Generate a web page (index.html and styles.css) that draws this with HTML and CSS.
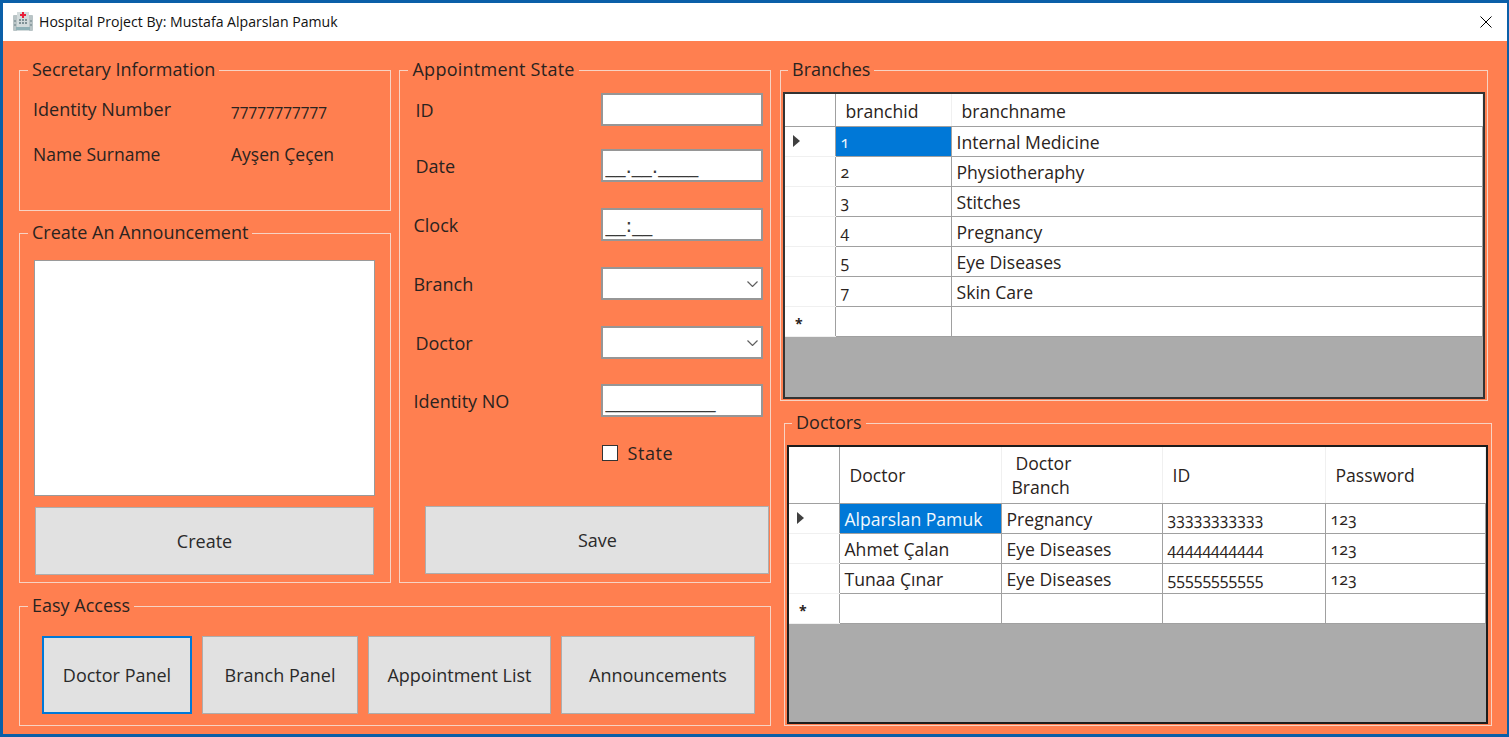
FILE: index.html
```html
<!DOCTYPE html>
<html lang="en">
<head>
    <meta charset="UTF-8">
    <meta name="viewport" content="width=device-width, initial-scale=1.0">
    <title>Hospital Project By: Mustafa Alparslan Pamuk</title>
    <link rel="stylesheet" href="styles.css">
</head>
<body>

<div class="window">

    <div class="titlebar">
        <svg class="app-icon" width="20" height="20" viewBox="0 0 20 20">
            <rect x="0" y="4" width="20" height="16" rx="1" fill="#b9c4c6"/>
            <rect x="4" y="1" width="12" height="19" fill="#d3dbdc"/>
            <rect x="6" y="8" width="2" height="2" fill="#7f9196"/>
            <rect x="9" y="8" width="2" height="2" fill="#7f9196"/>
            <rect x="12" y="8" width="2" height="2" fill="#7f9196"/>
            <rect x="6" y="11" width="2" height="2" fill="#7f9196"/>
            <rect x="9" y="11" width="2" height="2" fill="#7f9196"/>
            <rect x="12" y="11" width="2" height="2" fill="#7f9196"/>
            <rect x="1" y="9" width="2" height="2" fill="#8fa0a4"/>
            <rect x="1" y="13" width="2" height="2" fill="#8fa0a4"/>
            <rect x="17" y="9" width="2" height="2" fill="#8fa0a4"/>
            <rect x="17" y="13" width="2" height="2" fill="#8fa0a4"/>
            <rect x="3" y="16" width="14" height="3" fill="#8fb0b6"/>
            <path d="M9 1h2v2h2v2h-2v2H9V5H7V3h2z" fill="#e8203a"/>
        </svg>
        <span class="title-text">Hospital Project By: Mustafa Alparslan Pamuk</span>
        <svg class="close-icon" width="12" height="12" viewBox="0 0 12 12">
            <path d="M0.5 0.5L11.5 11.5M11.5 0.5L0.5 11.5" stroke="#000" stroke-width="1" fill="none"/>
        </svg>
    </div>

    <div class="form-area">

        <div class="left-area">
            <div class="top-row">

                <div class="left-col">
                    <fieldset class="group group-secretary">
                        <legend>Secretary Information</legend>
                        <div class="info-grid">
                            <span>Identity Number</span>
                            <span class="info-number">77777777777</span>
                            <span class="info-name">Name Surname</span>
                            <span class="info-name">Ayşen Çeçen</span>
                        </div>
                    </fieldset>

                    <fieldset class="group group-announce">
                        <legend>Create An Announcement</legend>
                        <textarea class="announce-text"></textarea>
                        <button class="btn btn-create" type="button">Create</button>
                    </fieldset>
                </div>

                <fieldset class="group group-appointment">
                    <legend>Appointment State</legend>
                    <div class="field-row field-row-first">
                        <label class="indent" for="randevuId">ID</label>
                        <input type="text" id="randevuId">
                    </div>
                    <div class="field-row">
                        <label class="indent" for="tarih">Date</label>
                        <input class="mask" type="text" id="tarih" value="__.__.____">
                    </div>
                    <div class="field-row">
                        <label for="saat">Clock</label>
                        <input class="mask" type="text" id="saat" value="__:__">
                    </div>
                    <div class="field-row">
                        <label for="brans">Branch</label>
                        <div class="combo">
                            <select id="brans"></select>
                            <svg class="combo-arrow" width="11" height="6" viewBox="0 0 11 6"><path d="M0.5 0.5L5.5 5.5L10.5 0.5" stroke="#606060" stroke-width="1.2" fill="none"/></svg>
                        </div>
                    </div>
                    <div class="field-row field-row-tight">
                        <label class="indent" for="doktor">Doctor</label>
                        <div class="combo">
                            <select id="doktor"></select>
                            <svg class="combo-arrow" width="11" height="6" viewBox="0 0 11 6"><path d="M0.5 0.5L5.5 5.5L10.5 0.5" stroke="#606060" stroke-width="1.2" fill="none"/></svg>
                        </div>
                    </div>
                    <div class="field-row">
                        <label for="tc">Identity NO</label>
                        <input class="mask" type="text" id="tc" value="___________">
                    </div>
                    <div class="state-row">
                        <input type="checkbox" id="durum">
                        <label for="durum">State</label>
                    </div>
                    <button class="btn btn-save" type="button">Save</button>
                </fieldset>

            </div>

            <fieldset class="group group-access">
                <legend>Easy Access</legend>
                <div class="access-row">
                    <button class="btn btn-focus btn-doctor" type="button">Doctor Panel</button>
                    <button class="btn btn-branch" type="button">Branch Panel</button>
                    <button class="btn btn-list" type="button">Appointment List</button>
                    <button class="btn btn-news" type="button">Announcements</button>
                </div>
            </fieldset>
        </div>

        <div class="right-area">
            <fieldset class="group group-branches">
                <legend>Branches</legend>
                <div class="data-grid">
                    <table>
                        <colgroup>
                            <col class="col-head"><col class="col-id"><col>
                        </colgroup>
                        <thead>
                            <tr><th class="row-head"></th><th>branchid</th><th>branchname</th></tr>
                        </thead>
                        <tbody>
                            <tr><td class="row-head"><span class="arrow"></span></td><td class="selected num">1</td><td>Internal Medicine</td></tr>
                            <tr><td class="row-head"></td><td class="num">2</td><td>Physiotheraphy</td></tr>
                            <tr><td class="row-head"></td><td class="num">3</td><td>Stitches</td></tr>
                            <tr><td class="row-head"></td><td class="num">4</td><td>Pregnancy</td></tr>
                            <tr><td class="row-head"></td><td class="num">5</td><td>Eye Diseases</td></tr>
                            <tr><td class="row-head"></td><td class="num">7</td><td>Skin Care</td></tr>
                            <tr><td class="row-head star">*</td><td></td><td></td></tr>
                        </tbody>
                    </table>
                </div>
            </fieldset>

            <fieldset class="group group-doctors">
                <legend>Doctors</legend>
                <div class="data-grid">
                    <table class="doctors-table">
                        <colgroup>
                            <col class="col-head"><col class="col-doc"><col class="col-doc-branch"><col class="col-doc-id"><col>
                        </colgroup>
                        <thead>
                            <tr>
                                <th class="row-head"></th>
                                <th>Doctor</th>
                                <th><span class="two-line"><span class="line-top">Doctor</span><span>Branch</span></span></th>
                                <th>ID</th>
                                <th>Password</th>
                            </tr>
                        </thead>
                        <tbody>
                            <tr><td class="row-head"><span class="arrow"></span></td><td class="selected">Alparslan Pamuk</td><td>Pregnancy</td><td class="num">33333333333</td><td class="num">123</td></tr>
                            <tr><td class="row-head"></td><td>Ahmet Çalan</td><td>Eye Diseases</td><td class="num">44444444444</td><td class="num">123</td></tr>
                            <tr><td class="row-head"></td><td>Tunaa Çınar</td><td>Eye Diseases</td><td class="num">55555555555</td><td class="num">123</td></tr>
                            <tr><td class="row-head star">*</td><td></td><td></td><td></td><td></td></tr>
                        </tbody>
                    </table>
                </div>
            </fieldset>
        </div>

    </div>
</div>

</body>
</html>
```
FILE: styles.css
```css
* {
    box-sizing: border-box;
}
html, body {
    margin: 0;
    padding: 0;
    overflow: hidden;
}
body {
    font-family: "Open Sans", "Noto Sans", sans-serif;
    font-size: 18px;
    color: #2a2320;
    background-color: #0a5fa8;
}
.window {
    width: 1509px;
    height: 737px;
    padding: 3px 2px 3px 3px;
    display: flex;
    flex-direction: column;
}
.titlebar {
    height: 38px;
    flex: none;
    background-color: #fff;
    display: flex;
    align-items: center;
    padding: 0 15px 0 10px;
}
.app-icon {
    margin-right: 6px;
    margin-bottom: 2px;
}
.title-text {
    font-size: 14.1px;
    color: #111;
    margin-bottom: 2px;
}
.close-icon {
    margin-left: auto;
}
.form-area {
    flex: 1;
    background-color: #ff7f50;
    display: flex;
    padding: 19px 0 0 16px;
    gap: 9px;
}
.left-area {
    width: 752px;
    display: flex;
    flex-direction: column;
    gap: 13px;
}
.top-row {
    display: flex;
    gap: 8px;
}
.left-col {
    width: 373px;
    display: flex;
    flex-direction: column;
    gap: 12px;
}
.right-area {
    width: 712px;
    display: flex;
    flex-direction: column;
    gap: 12px;
}
.group {
    margin: 0;
    padding: 0;
    min-width: 0;
    border: 1px solid #f7d3c4;
}
.group legend {
    margin-left: 8px;
    padding: 0 4px;
    height: 20px;
    line-height: 18px;
    font-size: 18px;
}
.group-secretary {
    height: 151px;
}
.info-grid {
    display: grid;
    grid-template-columns: 198px auto;
    row-gap: 22px;
    padding: 18px 0 0 13px;
    line-height: 22px;
}
.info-number {
    padding-top: 1px;
    font-size: 16px;
    font-variant-numeric: oldstyle-nums;
}
.info-name {
    font-size: 17.5px;
}
.group-announce {
    height: 360px;
    padding: 17px 0 0 14px;
}
.group-announce legend {
    margin-left: -6px;
}
.announce-text {
    display: block;
    width: 341px;
    height: 236px;
    border: 1px solid #9a9a9a;
    background-color: #fff;
    resize: none;
}
.btn {
    font-family: inherit;
    font-size: 18px;
    color: #2a2a2a;
    background-color: #e1e1e1;
    border: 1px solid #adadad;
    padding: 0;
}
.btn-create {
    display: block;
    width: 339px;
    height: 68px;
    margin: 11px 0 0 1px;
}
.group-appointment {
    width: 372px;
    height: 523px;
    padding: 13px 0 0 13px;
}
.group-appointment legend {
    margin-left: -5px;
    letter-spacing: 0.25px;
}
.field-row {
    display: grid;
    grid-template-columns: 188px 162px;
    align-items: center;
    margin-bottom: 26px;
}
.field-row-first {
    margin-bottom: 23px;
}
.field-row-tight {
    margin-bottom: 25px;
}
.field-row label.indent {
    padding-left: 2px;
}
.field-row input[type="text"], .combo select {
    width: 162px;
    height: 33px;
    border: 2px solid #969696;
    background-color: #fff;
    padding: 0 2px;
    font-family: inherit;
    font-size: 16px;
    color: #2a2a2a;
    display: block;
}
.field-row input.mask {
    font-family: "DejaVu Sans", sans-serif;
    font-size: 20px;
    color: #3a3a3a;
}
.combo {
    position: relative;
}
.combo select {
    appearance: none;
}
.combo-arrow {
    position: absolute;
    right: 5px;
    top: 14px;
}
.state-row {
    display: flex;
    align-items: center;
    gap: 9px;
    height: 16px;
    margin: 28px 0 0 189px;
    letter-spacing: 0.6px;
}
.state-row input {
    appearance: none;
    margin: 0;
    width: 16px;
    height: 16px;
    background-color: #fff;
    border: 1px solid #333;
}
.btn-save {
    display: block;
    width: 344px;
    height: 68px;
    margin: 45px 0 0 12px;
}
.group-access {
    width: 752px;
    height: 130px;
}
.access-row {
    display: flex;
    gap: 10px;
    padding: 20px 0 0 22px;
}
.access-row .btn {
    height: 78px;
}
.btn-doctor {
    width: 150px;
}
.btn-branch {
    width: 156px;
}
.btn-list {
    width: 183px;
}
.btn-news {
    width: 194px;
}
.btn-focus {
    border: 2px solid #0078d7;
}
.group-branches {
    width: 708px;
    height: 341px;
    padding: 12px 0 0 2px;
}
.group-branches legend, .group-doctors legend {
    margin-left: 5px;
}
.group-doctors {
    width: 708px;
    height: 313px;
    margin-left: 4px;
    padding: 12px 0 0 2px;
}
.data-grid {
    width: 702px;
    height: 307px;
    border: 2px solid #333;
    background-color: #ababab;
}
.group-doctors .data-grid {
    width: 701px;
    height: 279px;
    border-color: #1c1c1c;
}
.data-grid table {
    width: 100%;
    table-layout: fixed;
    border-collapse: collapse;
    background-color: #fff;
    font-size: 17.6px;
}
.col-head {
    width: 50px;
}
.col-id {
    width: 116px;
}
.col-doc {
    width: 162px;
}
.col-doc-branch {
    width: 161px;
}
.col-doc-id {
    width: 163px;
}
th {
    height: 32px;
    font-weight: normal;
    text-align: left;
    padding: 2px 0 0 10px;
    border-right: 1px solid #f0f0f0;
    border-bottom: 1px solid #a0a0a0;
}
.doctors-table th {
    height: 56px;
    padding-top: 0;
}
td {
    height: 30px;
    padding: 1px 0 0 5px;
    border-right: 1px solid #a0a0a0;
    border-bottom: 1px solid #a0a0a0;
    white-space: nowrap;
    overflow: hidden;
}
th.row-head {
    border-right: 1px solid #a0a0a0;
}
td.row-head {
    padding: 0 0 0 8px;
    border-bottom-color: #f0f0f0;
}
.num {
    font-variant-numeric: oldstyle-nums;
    font-size: 16px;
    padding-top: 2px;
}
.selected {
    background-color: #0078d7;
    color: #f2f8fd;
}
.arrow {
    display: block;
    width: 0;
    height: 0;
    border-left: 7px solid #404040;
    border-top: 6px solid transparent;
    border-bottom: 6px solid transparent;
}
td.star {
    font-size: 14px;
    font-weight: bold;
    padding: 5px 0 0 10px;
}
.two-line {
    display: flex;
    flex-direction: column;
    line-height: 24px;
}
.line-top {
    padding-left: 4px;
}
```
